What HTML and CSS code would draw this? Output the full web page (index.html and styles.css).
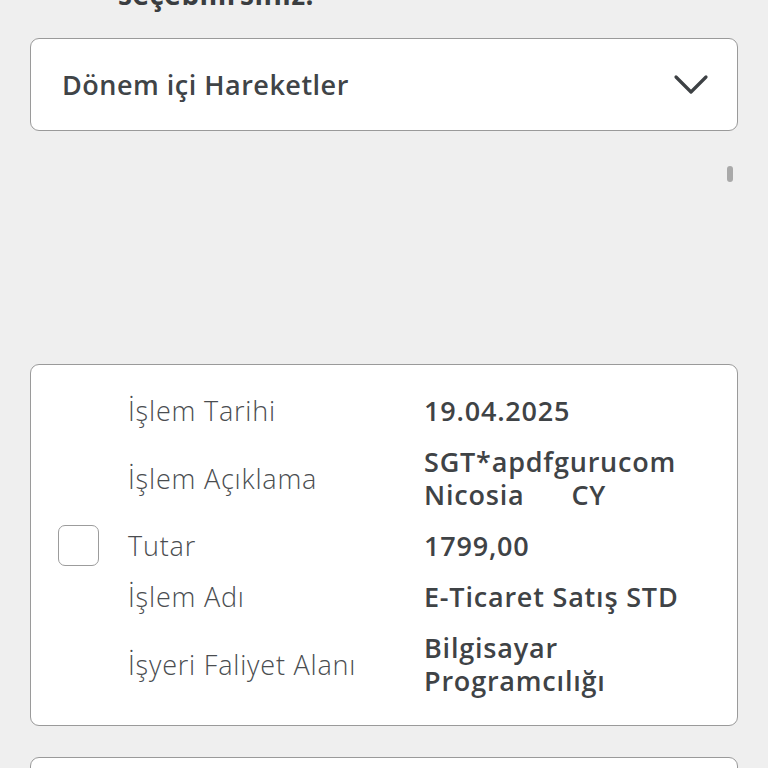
FILE: index.html
```html
<!DOCTYPE html>
<html lang="tr">
<head>
<meta charset="utf-8">
<link rel="stylesheet" href="styles.css">
</head>
<body>
<div class="page">
  <div class="intro"><h2 class="intro-text">seçebilirsiniz.</h2></div>
  <div class="select">
    <span class="select-text">Dönem içi Hareketler</span>
    <svg class="chevron" width="36" height="22" viewBox="0 0 36 22"><path d="M3 3 L18 18 L33 3" fill="none" stroke="#3d4144" stroke-width="3.2" stroke-linecap="round" stroke-linejoin="round"/></svg>
  </div>
  <div class="scroll-row"><span class="scroll-mark"></span></div>
  <div class="card">
    <div class="check-col"><span class="checkbox"></span></div>
    <div class="rows">
      <div class="label">İşlem Tarihi</div><div class="value">19.04.2025</div>
      <div class="label">İşlem Açıklama</div><div class="value">SGT*apdfgurucom<br>Nicosia&nbsp;&nbsp;&nbsp;&nbsp;&nbsp;&nbsp;CY</div>
      <div class="label">Tutar</div><div class="value">1799,00</div>
      <div class="label">İşlem Adı</div><div class="value">E-Ticaret Satış STD</div>
      <div class="label">İşyeri Faliyet Alanı</div><div class="value">Bilgisayar<br>Programcılığı</div>
    </div>
  </div>
  <div class="card card-next"></div>
</div>
</body>
</html>
```
FILE: styles.css
```css
html, body {
  margin: 0;
  padding: 0;
  background: #efefef;
  height: 768px;
  overflow: hidden;
}
.page {
  padding: 0 30px;
  font-family: "Open Sans", "Lato", sans-serif;
  color: #3e4245;
}
.intro {
  height: 38px;
  overflow: visible;
  position: relative;
}
.intro-text {
  margin: 0;
  position: absolute;
  left: 88px;
  bottom: 27px;
  font-size: 28px;
  line-height: 34px;
  font-weight: 700;
  letter-spacing: 0.5px;
  color: #3a3d40;
  white-space: nowrap;
}
.select {
  box-sizing: border-box;
  height: 93px;
  background: #fff;
  border: 1.5px solid #9a9a9a;
  border-radius: 9px;
  display: flex;
  align-items: center;
  justify-content: space-between;
  padding: 0 28px 0 31px;
}
.select-text {
  font-size: 27px;
  font-weight: 600;
  letter-spacing: 0.5px;
  color: #404447;
}
.chevron { display: block; }
.scroll-row {
  height: 233px;
  display: flex;
  justify-content: flex-end;
  padding-top: 35px;
  box-sizing: border-box;
}
.scroll-mark {
  width: 6px;
  height: 16px;
  border-radius: 3px;
  background: #a9a9a9;
  margin-right: 5px;
}
.card {
  box-sizing: border-box;
  background: #fff;
  border: 1.5px solid #9a9a9a;
  border-radius: 9px;
  display: flex;
  align-items: center;
  padding: 29px 0 28px 0;
}
.check-col {
  width: 97px;
  padding-left: 27px;
  box-sizing: border-box;
}
.checkbox {
  display: block;
  width: 41px;
  height: 41px;
  box-sizing: border-box;
  border: 1.5px solid #9c9c9c;
  border-radius: 7px;
}
.rows {
  display: grid;
  grid-template-columns: 296px 1fr;
  row-gap: 18px;
  align-items: center;
  font-size: 27px;
  line-height: 33px;
  letter-spacing: 0.8px;
}
.label {
  font-weight: 300;
  color: #4a4d50;
}
.value {
  font-weight: 600;
  color: #3f4346;
}
.card-next {
  margin-top: 31px;
  height: 60px;
  padding: 0;
}
```
